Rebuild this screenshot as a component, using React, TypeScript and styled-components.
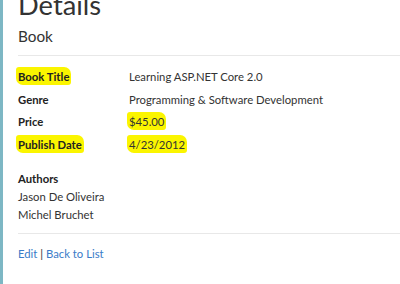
import React from "react";
import styled, { createGlobalStyle } from "styled-components";

const Global = createGlobalStyle`
  html, body { margin: 0; padding: 0; background: #fff; }
  body { font-family: "Lato", "Open Sans", sans-serif; color: #222; overflow: hidden; }
`;

const Frame = styled.div`
  width: 400px;
  height: 284px;
  box-sizing: border-box;
  border-left: 3px solid #7db7c4;
  padding-left: 15px;
  overflow: hidden;
`;

const Title = styled.h1`
  margin: -12px 0 0 0;
  font-size: 27.3px;
  font-weight: 400;
  line-height: 34px;
  color: #333;
`;

const Sub = styled.h4`
  margin: 3px 0 0 0;
  font-size: 15.3px;
  font-weight: 400;
  line-height: 22px;
  color: #333;
`;

const Rule = styled.hr<{ $top?: number }>`
  border: 0;
  border-top: 1px solid #e8e8e8;
  margin: ${(p) => p.$top ?? 8}px 0 10px 0;
`;

const Grid = styled.dl`
  display: grid;
  grid-template-columns: 111px 1fr;
  margin: 0;
  font-size: 11.3px;
  line-height: 22.5px;
`;

const Term = styled.dt`
  font-weight: 700;
  color: #222;
`;

const Value = styled.dd`
  margin: 0;
  color: #333;
`;

const Mark = styled.span`
  background: #fbf500;
  padding: 3px 2px 2px 2px;
  margin-left: -2px;
  border-radius: 3px 7px 3px 7px;
`;

const Authors = styled.div`
  margin-top: 14px;
  font-size: 11.3px;
  line-height: 18px;
`;

const AuthHead = styled.div`
  font-weight: 700;
  color: #222;
`;

const Name = styled.div`
  color: #333;
`;

const Links = styled.div`
  margin-top: 13px;
  font-size: 11.3px;
  color: #333;
`;

const Link = styled.a`
  color: #3a7bc8;
  text-decoration: none;
`;

export default function App() {
  return (
    <>
      <Global />
      <Frame>
        <Title>Details</Title>
        <Sub>Book</Sub>
        <Rule />
        <Grid>
          <Term><Mark>Book Title</Mark></Term>
          <Value>Learning ASP.NET Core 2.0</Value>
          <Term>Genre</Term>
          <Value>Programming &amp; Software Development</Value>
          <Term>Price</Term>
          <Value><Mark>$45.00</Mark></Value>
          <Term><Mark>Publish Date</Mark></Term>
          <Value><Mark>4/23/2012</Mark></Value>
        </Grid>
        <Authors>
          <AuthHead>Authors</AuthHead>
          <Name>Jason De Oliveira</Name>
          <Name>Michel Bruchet</Name>
        </Authors>
        <Rule $top={9} />
        <Links>
          <Link href="#">Edit</Link> | <Link href="#">Back to List</Link>
        </Links>
      </Frame>
    </>
  );
}
